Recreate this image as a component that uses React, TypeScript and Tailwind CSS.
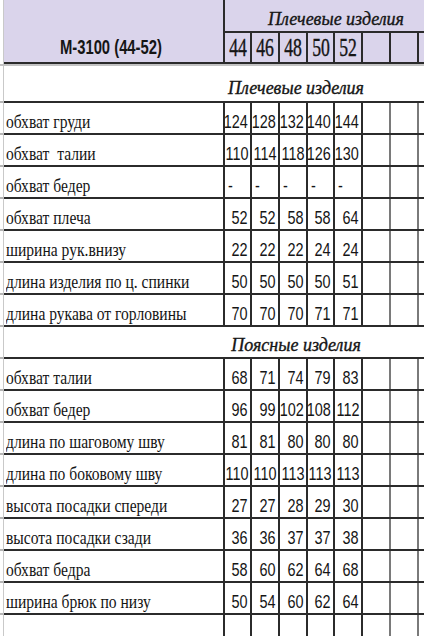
import React from "react";

type Row = { label: string; vals: string[] };

const shoulder: Row[] = [
  { label: "обхват груди", vals: ["124", "128", "132", "140", "144"] },
  { label: "обхват  талии", vals: ["110", "114", "118", "126", "130"] },
  { label: "обхват бедер", vals: ["-", "-", "-", "-", "-"] },
  { label: "обхват плеча", vals: ["52", "52", "58", "58", "64"] },
  { label: "ширина рук.внизу", vals: ["22", "22", "22", "24", "24"] },
  { label: "длина изделия по ц. спинки", vals: ["50", "50", "50", "50", "51"] },
  { label: "длина рукава от горловины", vals: ["70", "70", "70", "71", "71"] },
];

const waist: Row[] = [
  { label: "обхват талии", vals: ["68", "71", "74", "79", "83"] },
  { label: "обхват бедер", vals: ["96", "99", "102", "108", "112"] },
  { label: "длина по шаговому шву", vals: ["81", "81", "80", "80", "80"] },
  { label: "длина по боковому шву", vals: ["110", "110", "113", "113", "113"] },
  { label: "высота посадки спереди", vals: ["27", "27", "28", "29", "30"] },
  { label: "высота посадки сзади", vals: ["36", "36", "37", "37", "38"] },
  { label: "обхват бедра", vals: ["58", "60", "62", "64", "68"] },
  { label: "ширина брюк по низу", vals: ["50", "54", "60", "62", "64"] },
];

const sizeW = ["w-[27px]", "w-[28px]", "w-[28px]", "w-[27px]", "w-[28px]"];
const serif = "[font-family:Liberation_Serif,serif]";
const sans = "[font-family:Liberation_Sans,Arial,sans-serif]";

function Gutter({ bottom = true }: { bottom?: boolean }) {
  return (
    <div
      className={
        "w-[4px] shrink-0 border-r border-r-[#c9c9c9] " +
        (bottom ? "border-b-2 border-b-[#b5b5b5]" : "")
      }
    />
  );
}

function Extras({ dark }: { dark?: boolean }) {
  const c = dark ? "border-[#2b2b2b]" : "border-[#7a7a7a]";
  return (
    <>
      <div className={"w-[28px] shrink-0 border-r-2 " + c} />
      <div className={"w-[28px] shrink-0 border-r-2 " + c} />
      <div className="flex-1" />
    </>
  );
}

function DataRow({ row }: { row: Row }) {
  return (
    <div className="flex h-[32px]">
      <Gutter />
      <div className="flex flex-1 border-b-2 border-[#2b2b2b]">
        <div className="flex w-[221px] shrink-0 items-end overflow-visible border-r-2 border-[#2b2b2b] pb-[2px] pl-[2px]">
          <span
            className={
              serif +
              " inline-block origin-left scale-x-[0.82] whitespace-pre text-[19px] leading-none text-[#151515]"
            }
          >
            {row.label}
          </span>
        </div>
        {row.vals.map((v, i) => (
          <div
            key={i}
            className={
              sizeW[i] +
              " flex shrink-0 items-end border-r-2 border-[#2b2b2b] pb-[2px] " +
              (v === "-" ? "justify-start pl-[3px]" : "justify-end pr-[2px]")
            }
          >
            <span
              className={
                sans +
                " inline-block shrink-0 whitespace-nowrap text-[18.5px] leading-none text-[#151515] scale-x-[0.78] " +
                (v === "-" ? "origin-left" : "origin-right")
              }
            >
              {v}
            </span>
          </div>
        ))}
        <Extras />
      </div>
    </div>
  );
}

function SectionRow({ title, tall }: { title: string; tall?: boolean }) {
  return (
    <div className={"flex " + (tall ? "h-[37px]" : "h-[32px]")}>
      <Gutter />
      <div className="flex flex-1 border-b-2 border-[#2b2b2b]">
        <div className="w-[223px] shrink-0" />
        <div
          className={
            "flex w-[138px] shrink-0 items-end justify-center " +
            (tall ? "pb-[4px]" : "pb-[3px]")
          }
        >
          <span
            className={
              serif +
              " inline-block shrink-0 whitespace-nowrap text-[18px] italic leading-none text-[#151515] [-webkit-text-stroke:0.35px_#151515]"
            }
          >
            {title}
          </span>
        </div>
        <div className="flex-1" />
      </div>
    </div>
  );
}

export default function App() {
  return (
    <div className="h-[636px] w-[424px] overflow-hidden bg-white">
      {/* header */}
      <div className="flex h-[64px]">
        <div className="w-[4px] shrink-0 border-r border-r-[#c9c9c9]" />
        <div className="flex flex-1 border-b-2 border-[#2b2b2b] bg-[#dad4eb]">
          <div className="flex w-[221px] shrink-0 items-end justify-center border-r-2 border-[#2b2b2b] pb-[5px] pr-[6px]">
            <span
              className={
                sans +
                " inline-block shrink-0 origin-center scale-x-[0.74] whitespace-nowrap text-[20px] font-bold leading-none text-[#151515]"
              }
            >
              M-3100 (44-52)
            </span>
          </div>
          <div className="flex flex-1 flex-col">
            <div className="flex h-[33px] items-end border-b-2 border-[#2b2b2b] pb-[3px] pl-[43px]">
              <span
                className={
                  serif +
                  " inline-block shrink-0 whitespace-nowrap text-[18px] italic leading-none text-[#151515] [-webkit-text-stroke:0.35px_#151515]"
                }
              >
                Плечевые изделия
              </span>
            </div>
            <div className="flex flex-1">
              {["44", "46", "48", "50", "52"].map((s, i) => (
                <div
                  key={s}
                  className={
                    sizeW[i] +
                    " flex shrink-0 items-end justify-center border-r-2 border-[#2b2b2b] pb-[1px]"
                  }
                >
                  <span
                    className={
                      serif +
                      " inline-block shrink-0 scale-x-[0.68] whitespace-nowrap text-[26px] leading-none text-[#151515] [-webkit-text-stroke:0.4px_#151515]"
                    }
                  >
                    {s}
                  </span>
                </div>
              ))}
              <Extras dark />
            </div>
          </div>
        </div>
      </div>
      <div className="h-[2px] bg-[#c3c3c3]" />

      <SectionRow title="Плечевые изделия" tall />
      {shoulder.map((r, i) => (
        <DataRow key={"s" + i} row={r} />
      ))}
      <SectionRow title="Поясные изделия" />
      {waist.map((r, i) => (
        <DataRow key={"w" + i} row={r} />
      ))}

      {/* partial bottom row */}
      <div className="flex h-[21px]">
        <Gutter bottom={false} />
        <div className="flex flex-1">
          <div className="w-[221px] shrink-0 border-r-2 border-[#2b2b2b]" />
          {sizeW.map((w, i) => (
            <div key={i} className={w + " shrink-0 border-r-2 border-[#2b2b2b]"} />
          ))}
          <Extras />
        </div>
      </div>
    </div>
  );
}
